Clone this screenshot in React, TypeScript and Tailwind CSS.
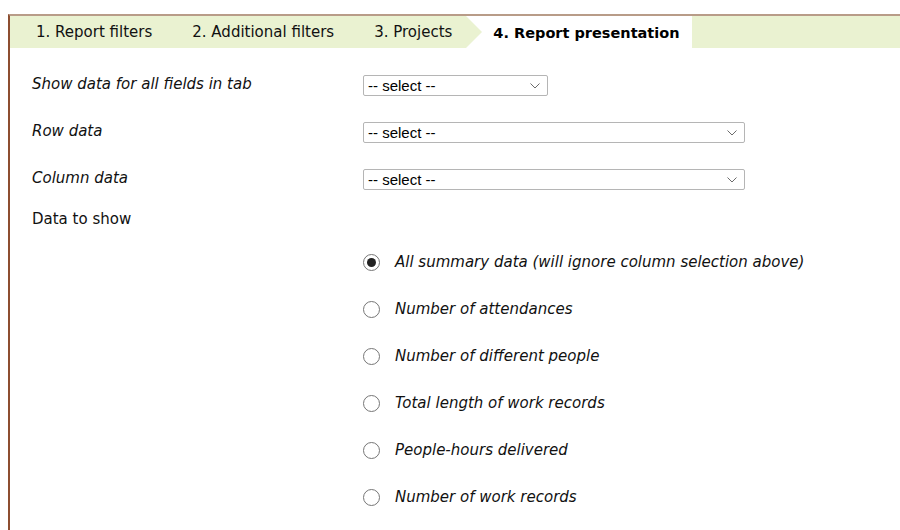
import React, { useState } from "react";

const tabs = ["1. Report filters", "2. Additional filters", "3. Projects"];

const fields = [
  { label: "Show data for all fields in tab", wide: false },
  { label: "Row data", wide: true },
  { label: "Column data", wide: true },
];

const options = [
  "All summary data (will ignore column selection above)",
  "Number of attendances",
  "Number of different people",
  "Total length of work records",
  "People-hours delivered",
  "Number of work records",
];

function Select({ wide }: { wide: boolean }) {
  return (
    <div
      className={
        "relative h-[21px] " + (wide ? "w-[382px]" : "w-[185px]")
      }
    >
      <select className="h-full w-full appearance-none rounded-[2px] border border-[#b5b5b5] bg-white pl-[4px] text-[15px] leading-none text-black outline-none [font-family:'Liberation_Sans',Arial,sans-serif]">
        <option>-- select --</option>
      </select>
      <svg
        className="pointer-events-none absolute right-[8px] top-[8px]"
        width="10"
        height="6"
        viewBox="0 0 10 6"
      >
        <path d="M0.5 0.5 L5 5 L9.5 0.5" fill="none" stroke="#6b6b6b" strokeWidth="1" />
      </svg>
    </div>
  );
}

export default function App() {
  const [choice, setChoice] = useState(0);

  return (
    <div className="min-h-[530px] bg-white pt-[14px] [font-family:'DejaVu_Sans',Verdana,sans-serif] text-[#111]">
      <div className="ml-[8px] min-h-[516px] border-l-2 border-t-2 border-l-[#8d4e30] border-t-[#b89c88]">
        <div className="flex h-[32px] items-stretch bg-[#eaf2d1] text-[15px]">
          {tabs.map((t, i) => (
            <div
              key={t}
              className={
                "flex items-center pt-[1px] " +
                (i === 0 ? "pl-[26px] pr-[20px]" : "px-[20px]")
              }
            >
              {t}
            </div>
          ))}
          <div className="relative ml-[-6px] flex items-center bg-white pl-[27px] pr-[12px] pt-[4px] text-[14.5px] font-bold text-black">
            <svg
              className="absolute left-0 top-0"
              width="16"
              height="32"
              viewBox="0 0 16 32"
            >
              <polygon points="0,0 16,16 0,32" fill="#eaf2d1" />
            </svg>
            4. Report presentation
          </div>
          <div className="flex-1" />
        </div>

        <div className="pl-[22px] pt-[14px] text-[15px]">
          {fields.map((f) => (
            <div key={f.label} className="flex h-[47px] items-center">
              <div className="w-[331px] pb-[3px] italic">{f.label}</div>
              <Select wide={f.wide} />
            </div>
          ))}
          <div className="flex h-[32px] items-center pt-[1px]">Data to show</div>

          <div className="mt-[4px] pl-[331px]">
            {options.map((o, i) => (
              <label
                key={o}
                className="flex h-[47px] cursor-pointer items-center"
                onClick={() => setChoice(i)}
              >
                <span className="flex h-[17px] w-[17px] items-center justify-center rounded-full border border-[#767676] bg-white">
                  {choice === i && (
                    <span className="h-[9px] w-[9px] rounded-full bg-[#222]" />
                  )}
                </span>
                <span className="ml-[15px] italic">{o}</span>
              </label>
            ))}
          </div>
        </div>
      </div>
    </div>
  );
}
